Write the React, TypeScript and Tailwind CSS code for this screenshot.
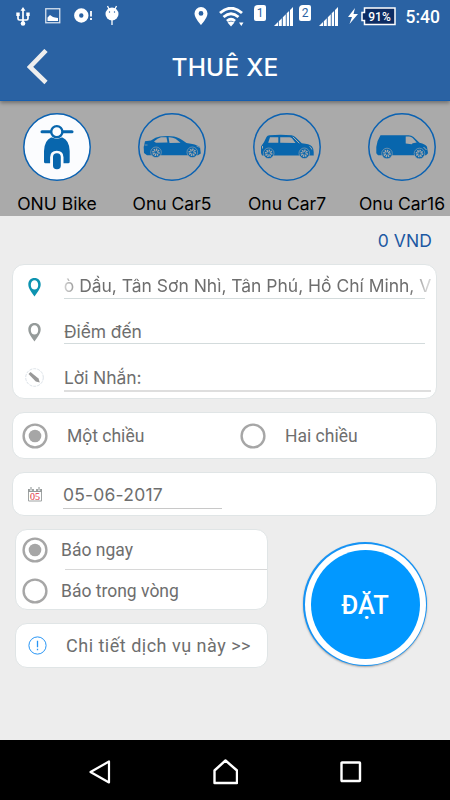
import { ReactNode } from "react";

const vehicles = [
  { label: "ONU Bike", icon: <BikeIcon />, active: true },
  { label: "Onu Car5", icon: <SedanIcon />, active: false },
  { label: "Onu Car7", icon: <HatchbackIcon />, active: false },
  { label: "Onu Car16", icon: <VanIcon />, active: false },
];

function BikeIcon() {
  return (
    <g>
      <path
        d="M28 24.500h11.500q3.500 1.500 5 4.500 2.200 4 2.200 9v10.800q0 1.500-1.500 1.500H40.500v-6q0-6.600-6.700-6.600t-6.700 6.600v6h-4.600q-1.500 0-1.500-1.500V38q0-5 2.200-9 1.500-3 4.800-4.500z"
        fill="#0866ad"
      />
      <circle cx="33.800" cy="18.700" r="7.200" fill="#fbfcfe" />
      <path d="M19 18.700h30" stroke="#0866ad" strokeWidth="3" strokeLinecap="round" />
      <circle cx="33.800" cy="18.700" r="5.600" fill="#fbfcfe" stroke="#0866ad" strokeWidth="2.400" />
      <rect x="30" y="40.300" width="7.800" height="16" rx="3.800" fill="#0866ad" />
    </g>
  );
}

function Wheel({ cx, cy }: { cx: number; cy: number }) {
  return (
    <g fill="none" stroke="#aaa">
      <circle cx={cx} cy={cy} r="5.200" fill="#0866ad" stroke="none" />
      <circle cx={cx} cy={cy} r="5.300" strokeWidth="0.600" />
      <circle cx={cx} cy={cy} r="2.500" strokeWidth="2.600" strokeDasharray="1.200 0.700" />
    </g>
  );
}

function SedanIcon() {
  return (
    <g>
      <path
        d="M7 28.300l6-.8q4.500-3.300 9-4 8-.8 14 0 5 .8 12.500 6.500 9.500 1 13.500 4l.8 6.500L60 42.300H9L6 40q-1-6.500 1-11.700z"
        fill="#0866ad"
      />
      <path d="M16 28.500q3.500-3.500 7-4.200h5.500l1 5.300L18 29.700zM30.500 24.200q4-.2 7 1.500l5 4-11 .2z" fill="#aaa" />
      <path d="M58.500 33l3.500 1.500M6.500 32h3" stroke="#aaa" strokeWidth="0.700" />
      <Wheel cx={18} cy={39.300} />
      <Wheel cx={54.300} cy={39.300} />
    </g>
  );
}

function HatchbackIcon() {
  return (
    <g>
      <path
        d="M13.500 24q.8-1.500 3-1.700 11-1 22 0 2.500.2 4.300 2.200l6 5.800q7.500.5 10.200 3.200 1.500 2 1.700 5.500v3.500H9L8 40v-6.500q3-3.500 5.500-9.500z"
        fill="#0866ad"
      />
      <path d="M17 24.200h8.300v5.500H15.200zM27.200 24.200h9.300q1.500 0 2.500 1l3.500 4.800-15.300-.2z" fill="#aaa" />
      <path d="M39.800 23.800l6.500 6.500" stroke="#aaa" strokeWidth="1" />
      <path d="M56.500 33.500q1.800.8 2.300 3M9.500 33v2.500" stroke="#aaa" strokeWidth="1" fill="none" />
      <Wheel cx={15.700} cy={40.300} />
      <Wheel cx={51.300} cy={40.300} />
    </g>
  );
}

function VanIcon() {
  return (
    <g>
      <path
        d="M12.500 22.300h28q3 0 5 1.700l6 5.800q6 1.500 7.500 4l1 6.500-2 2H10l-1.700-2V34q1-7 4.200-11.700z"
        fill="#0866ad"
      />
      <path d="M37.700 23.500h3.500q2 0 3.500 1.500l4 4.500-4 .7-1 1-6-.7z" fill="#aaa" />
      <path d="M55.500 34l3 3" stroke="#aaa" strokeWidth="1" />
      <Wheel cx={19} cy={40.500} />
      <Wheel cx={51.500} cy={40.500} />
    </g>
  );
}

function SimCard({ label }: { label: string }) {
  return (
    <span className="mt-[5px] flex h-4 w-3 items-center justify-center rounded-[2px] rounded-tl-[4px] bg-white font-[Roboto] text-[12px] leading-none text-[#2a62a3]">
      {label}
    </span>
  );
}

function Signal() {
  return (
    <svg width="19" height="19" viewBox="0 0 19 19" className="mt-[7px]">
      <path d="M0 19l4-4v4zM4.800 14.200l3-3V19h-3zM8.800 10.200l3-3V19h-3zM12.700 6.300l2.400-2.400V19h-2.400zM16 3l3-3v19h-3z" fill="#fff" />
    </svg>
  );
}

function StatusBar() {
  return (
    <div className="flex h-8 items-start text-white">
      <svg width="14" height="20" viewBox="0 0 14 20" fill="none" stroke="#fff" strokeWidth="1.700" className="ml-[16px] mt-[7px]">
        <path d="M7 2.500V17M2 8v3.500q0 1.500 1.500 1.500H10.500q1.500 0 1.500-1.500V8" />
        <path d="M4.500 3.800L7 0l2.500 3.800zM0.300 5.500h3.400v3.500h-3.400zM10.300 5.500h3.400v3.500h-3.400z" fill="#fff" stroke="none" />
        <circle cx="7" cy="16.500" r="2.300" fill="#fff" stroke="none" />
      </svg>
      <svg width="16" height="16" viewBox="0 0 16 16" className="ml-[15px] mt-[8px]">
        <rect x="0.750" y="0.750" width="14" height="14" fill="none" stroke="#d4e0ee" strokeWidth="1.300" />
        <path d="M2.500 13V9.500L5 7l3 2 2 .5 3 .5v3z" fill="#fff" />
      </svg>
      <svg width="19" height="16" viewBox="0 0 19 16" className="ml-[12.500px] mt-[8px]">
        <circle cx="7.300" cy="7.500" r="4.700" fill="none" stroke="#fff" strokeWidth="5" />
        <path d="M17 3v5.500M17 10v2" stroke="#fff" strokeWidth="1.800" />
      </svg>
      <svg width="14" height="21" viewBox="0 0 14 21" className="ml-[12.500px] mt-[5px]">
        <path d="M2.500 1L4 4M11.500 1L10 4M7 14v6" stroke="#fff" strokeWidth="1.300" />
        <ellipse cx="7" cy="9" rx="6.500" ry="6.500" fill="#fff" />
        <circle cx="4.500" cy="7" r="0.700" fill="#2a62a3" />
        <circle cx="9.500" cy="7" r="0.700" fill="#2a62a3" />
      </svg>
      <svg width="14" height="18" viewBox="0 0 14 18" className="ml-[75px] mt-[7px]">
        <path fillRule="evenodd" d="M7 0a6.500 6.500 0 0 1 6.500 6.500C13.500 11 7 18 7 18S.5 11 .5 6.500A6.500 6.500 0 0 1 7 0zm0 4a2.400 2.400 0 1 0 0 4.800A2.400 2.400 0 0 0 7 4z" fill="#fff" />
      </svg>
      <svg width="25" height="20" viewBox="0 0 25 20" fill="none" stroke="#fff" strokeWidth="2.900" className="ml-[11px] mt-[7px]">
        <path d="M1 6q11-9.500 22 0M4.500 10q7.500-6.500 15 0M8 14q4-3.500 8 0" />
        <path d="M8.500 15.500q3.500-2 7 0L12 19.500zM20 15.500h4.500L22.300 19z" fill="#fff" stroke="none" />
      </svg>
      <div className="ml-[10px] flex gap-[8px]">
        <SimCard label="1" />
        <Signal />
      </div>
      <div className="ml-[6px] flex gap-[8px]">
        <SimCard label="2" />
        <Signal />
      </div>
      <svg width="10" height="16" viewBox="0 0 10 16" className="ml-[10px] mt-[8px]">
        <path d="M7 0L0 9h4l-2.500 7L10 6H5.500z" fill="#fff" />
      </svg>
      <svg width="35" height="19" viewBox="0 0 35 19" className="ml-[3px] mt-[7px]">
        <path d="M3.500 1H34v16.500H3.500v-4H1V5.500h2.500z" fill="#0d2c63" stroke="#fff" strokeWidth="1.500" />
        <text x="18.500" y="13.500" textAnchor="middle" className="fill-white font-[Roboto] text-[12px] font-medium">
          91%
        </text>
      </svg>
      <span className="ml-[9.500px] mt-[8px] font-[Roboto] text-[17.500px] leading-[18px] font-medium">5:40</span>
    </div>
  );
}

function Pin({ color }: { color: string }) {
  return (
    <svg width="13" height="19" viewBox="0 0 13 19">
      <path
        fillRule="evenodd"
        d="M6.500 0C10.300 0 12.700 2.700 12.700 6.300c0 4.500-3.500 8-6.200 12.200C3.800 14.300.3 10.800.3 6.300.3 2.700 2.700 0 6.500 0zm0 2.200c-2 0-3.700 1.900-3.700 4.700s1.700 4.700 3.700 4.700 3.700-1.900 3.700-4.700S8.500 2.200 6.500 2.200z"
        fill={color}
      />
    </svg>
  );
}

function PencilIcon() {
  return (
    <svg width="19" height="19" viewBox="0 0 19 19">
      <circle cx="9.500" cy="9.500" r="8.800" fill="none" stroke="#c5ced9" strokeWidth="0.600" strokeDasharray="3 1" />
      <path d="M3.500 6l2-2 8 6.500 1.300 4-4-1z" fill="#999" />
    </svg>
  );
}

function CalendarIcon() {
  return (
    <svg width="14" height="15" viewBox="0 0 14 15">
      <path d="M0.500 2.500h13v11.500h-13z" fill="#fff" stroke="#a0a4a4" />
      <path d="M0 2h14v3H0z" fill="#969b9b" />
      <path d="M3 0v4M7 0v4M11 0v4" stroke="#fff" strokeWidth="2.200" />
      <path d="M3 0v3.500M11 0v3.500" stroke="#8a9090" strokeWidth="1" />
      <text x="7" y="13" textAnchor="middle" className="fill-[#e0303e] font-['Liberation_Serif'] text-[10px]">
        05
      </text>
    </svg>
  );
}

function Radio({ checked }: { checked?: boolean }) {
  return (
    <svg width="26" height="26" viewBox="0 0 26 26" className="shrink-0">
      <circle cx="13" cy="13" r="11.400" fill="none" stroke="#a6a6a6" strokeWidth="2.400" />
      {checked && <circle cx="13" cy="13" r="6.300" fill="#a6a6a6" />}
    </svg>
  );
}

function Card({ className, children }: { className: string; children: ReactNode }) {
  return <div className={`rounded-[12px] border border-[#e0e5e6] bg-white ${className}`}>{children}</div>;
}

export default function App() {
  return (
    <div className="flex h-[800px] w-[450px] flex-col overflow-hidden bg-[#ededed] font-[Inter,sans-serif] text-[#6e6e6e]">
      <header className="relative z-10 h-[101px] shrink-0 border-b border-[#165eae] bg-[#2a62a3] shadow-[0_2px_4px_rgba(0,0,0,0.35)]">
        <StatusBar />
        <div className="grid h-[69px] grid-cols-[80px_1fr_80px] items-center">
          <svg width="22" height="36" viewBox="0 0 22 36" fill="none" stroke="#eee" strokeWidth="4.600" className="ml-[27px]">
            <path d="M19 1.500L3 18l16 15.500" />
          </svg>
          <h1 className="pt-[2px] text-center text-[24.500px] leading-none font-medium tracking-[0.200px] text-white">THUÊ XE</h1>
        </div>
      </header>

      <nav className="flex h-[115px] shrink-0 bg-[#aaa]">
        {vehicles.map((v) => (
          <button key={v.label} className="flex w-[115px] shrink-0 flex-col items-center pt-[12px] pr-px">
            <svg width="68" height="68" viewBox="0 0 68 68">
              <circle cx="34" cy="34" r="33.200" fill={v.active ? "#fbfcfe" : "none"} stroke="#0b62b2" strokeWidth="1.500" />
              {v.icon}
            </svg>
            <span className="mt-[12px] text-[17.500px] leading-[22px] whitespace-nowrap text-black">{v.label}</span>
          </button>
        ))}
      </nav>

      <main className="flex flex-1 flex-col">
        <p className="mt-[15px] mr-[18px] text-right text-[17.500px] leading-[20px] tracking-[0.100px] text-[#1c58a2]">0 VND</p>

        <Card className="mr-[13px] ml-[12px] mt-[13px] flex h-[135px] flex-col">
          <div className="flex h-[34px]">
            <span className="mt-[13px] ml-[15px] w-[36px]">
              <Pin color="#0d93b0" />
            </span>
            <div className="relative w-[361px] border-b border-[#d3dbdc]">
              <div className="absolute top-[10px] left-0 flex w-[367px] justify-center overflow-hidden text-[17.500px] leading-[22px] tracking-[-0.020px] whitespace-nowrap [mask-image:linear-gradient(to_right,rgba(0,0,0,0.3),black_5%,black_94%,rgba(0,0,0,0.3)_99%)]">
                ò Dầu, Tân Sơn Nhì, Tân Phú, Hồ Chí Minh, V
              </div>
            </div>
          </div>
          <div className="flex h-[45px]">
            <span className="mt-[24px] ml-[15px] w-[36px]">
              <Pin color="#959b9a" />
            </span>
            <div className="w-[361px] border-b border-[#d3dbdc] pt-[22px] text-[17.500px] leading-[22px] tracking-[-0.100px]">Điểm đến</div>
          </div>
          <div className="flex h-[48px]">
            <span className="mt-[24px] ml-[12px] w-[39px]">
              <PencilIcon />
            </span>
            <div className="w-[367px] border-b-2 border-[#dedede] pt-[23px] text-[17.500px] leading-[22px] tracking-[-0.100px]">Lời Nhắn:</div>
          </div>
        </Card>

        <Card className="mr-[13px] ml-[12px] mt-[13px] flex h-[47px] items-center pt-px font-[Roboto,sans-serif] text-[17.500px]">
          <label className="flex w-[217px] items-center gap-[19px] pl-[9px]">
            <Radio checked />
            <span className="pt-px">Một chiều</span>
          </label>
          <label className="flex items-center gap-[19px] pl-[10px]">
            <Radio />
            <span className="pt-px">Hai chiều</span>
          </label>
        </Card>

        <Card className="mr-[13px] ml-[12px] mt-[13px] flex h-[44px]">
          <span className="mt-[14px] ml-[15px] w-[35px]">
            <CalendarIcon />
          </span>
          <div className="h-[36px] w-[159px] border-b border-[#c8c8c8] pt-[11px] text-[17.500px] leading-[22px] tracking-[0.200px]">05-06-2017</div>
        </Card>

        <div className="flex">
          <div className="ml-[15px] w-[253px]">
            <Card className="mt-[13px] h-[81px] font-[Roboto,sans-serif] text-[17.500px]">
              <label className="flex h-[39px] items-center gap-[13px] pl-[6px]">
                <Radio checked />
                <span className="pt-px">Báo ngay</span>
              </label>
              <div className="ml-[49px] border-t border-[#d8d8d8]" />
              <label className="flex h-[41px] items-center gap-[13px] pl-[6px]">
                <Radio />
                <span className="pt-px">Báo trong vòng</span>
              </label>
            </Card>
            <Card className="mt-[13px] flex h-[45px] items-center pl-[12px]">
              <svg width="19" height="19" viewBox="0 0 19 19">
                <circle cx="9.500" cy="9.500" r="8.600" fill="none" stroke="#2795f5" strokeWidth="1" />
                <path d="M9.500 4.800v6.500M9.500 12.800v1.400" stroke="#2795f5" strokeWidth="1.300" />
              </svg>
              <span className="ml-[19px] font-[Roboto,sans-serif] text-[18px] tracking-[0.500px]">Chi tiết dịch vụ này &gt;&gt;</span>
            </Card>
          </div>
          <button className="mt-[26px] ml-[35px] grid h-[124px] w-[124px] place-items-center rounded-full bg-[#1593f5] p-[1.500px] shadow-[0_1px_2px_rgba(0,0,0,0.3)]">
            <span className="grid h-full w-full place-items-center rounded-full bg-white">
              <span className="flex h-[109px] w-[109px] items-center justify-center rounded-full bg-[#0298ff] pt-[2px] font-[Roboto,sans-serif] text-[25.500px] font-medium text-white">
                ĐẶT
              </span>
            </span>
          </button>
        </div>
      </main>

      <footer className="flex h-[60px] shrink-0 items-center bg-black pt-[3px]">
        <svg width="22" height="26" viewBox="0 0 22 26" fill="none" stroke="#fff" strokeWidth="2.200" strokeLinejoin="round" className="ml-[89px]">
          <path d="M20 2.500v21L1.500 13z" />
        </svg>
        <svg width="26" height="26" viewBox="0 0 26 26" fill="none" stroke="#fff" strokeWidth="2.400" strokeLinejoin="round" className="ml-[101px]">
          <path d="M13.500 1.500L25 11.500v12.500H2.500v-12.500z" />
        </svg>
        <svg width="22" height="22" viewBox="0 0 22 22" fill="none" stroke="#fff" strokeWidth="2.400" className="ml-[102px]">
          <rect x="1.500" y="1.500" width="18.500" height="18.500" rx="0.500" />
        </svg>
      </footer>
    </div>
  );
}
